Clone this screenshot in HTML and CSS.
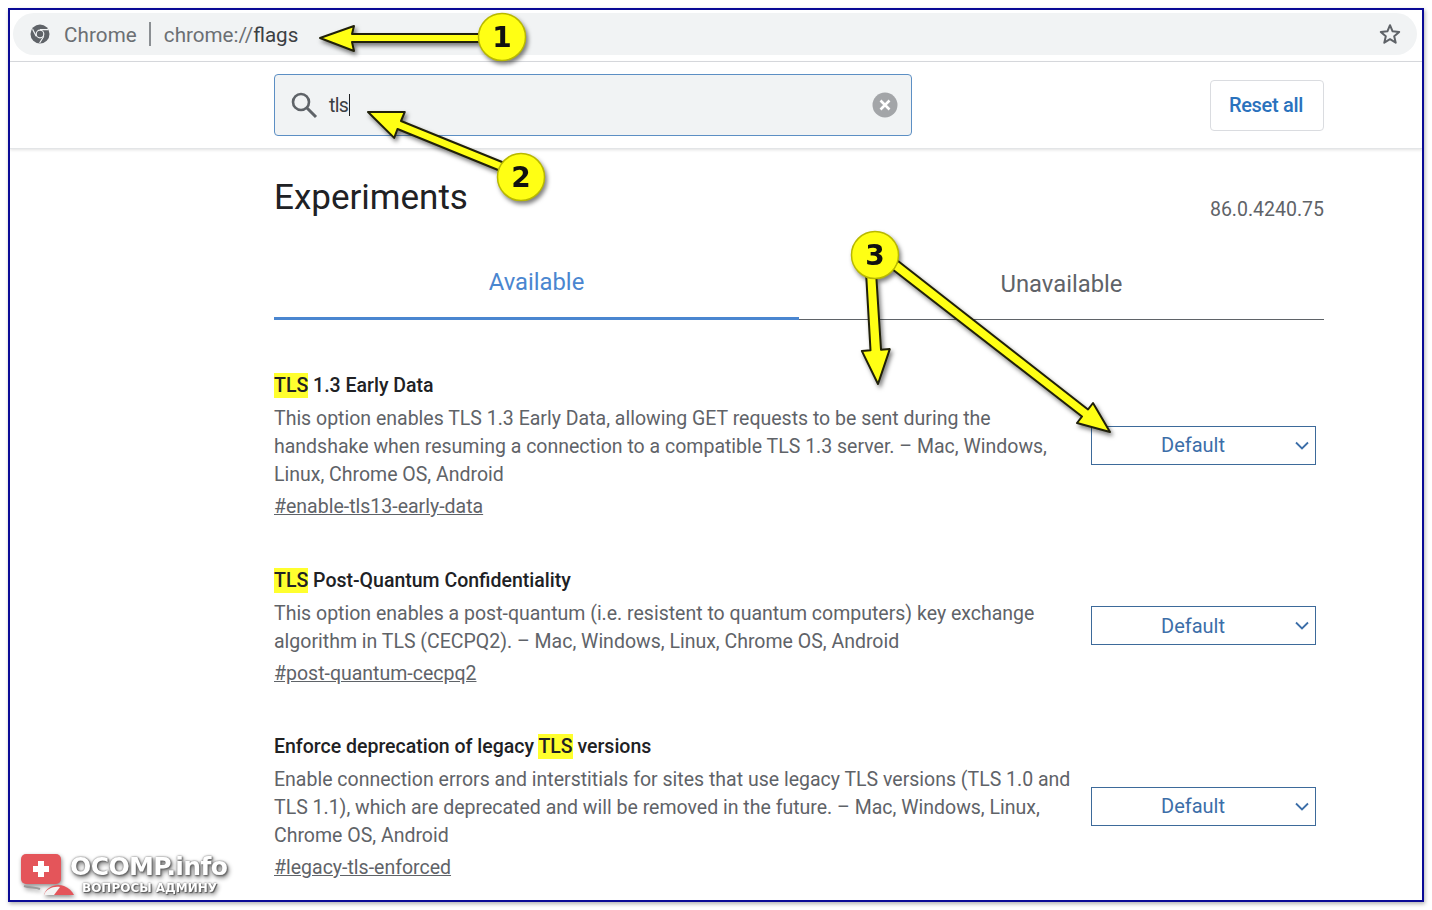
FILE: index.html
```html
<!DOCTYPE html>
<html lang="en">
<head>
<meta charset="utf-8">
<title>Experiments</title>
<link rel="stylesheet" href="styles.css">
</head>
<body>
<div class="frame">
  <div class="omnibox-row">
    <div class="omnibox">
      <svg class="chrome-icon" viewBox="0 0 20 20"><circle cx="10" cy="10" r="9.5" fill="#5f6368"/><circle cx="10" cy="10" r="4.4" fill="#f1f3f4"/><circle cx="10" cy="10" r="3.2" fill="#5f6368"/><path d="M10 5.6h8.4M6.2 12.2 2.6 5.2M13.8 12.2 9.6 19" stroke="#f1f3f4" stroke-width="1.2" fill="none"/></svg>
      <span class="origin">Chrome</span>
      <span class="divider"></span>
      <span class="url">chrome://<b class="url-strong">flags</b></span>
      <svg class="star" viewBox="0 0 24 24"><path d="M12 3.2l2.6 6.1 6.6.6-5 4.3 1.5 6.5L12 17.2l-5.7 3.5 1.5-6.5-5-4.3 6.6-.6z" fill="none" stroke="#5f6368" stroke-width="2" stroke-linejoin="round"/></svg>
    </div>
  </div>
  <header class="search-header">
    <div class="search-box">
      <svg class="search-icon" viewBox="0 0 28 28"><circle cx="11" cy="11" r="8" fill="none" stroke="#5f6368" stroke-width="2.6"/><path d="M17 17l9 9" stroke="#5f6368" stroke-width="3"/></svg>
      <span class="search-text">tls</span><span class="caret"></span>
      <svg class="clear-icon" viewBox="0 0 26 26"><circle cx="13" cy="13" r="12.5" fill="#a3a5a8"/><path d="M8.5 8.5l9 9M17.5 8.5l-9 9" stroke="#fff" stroke-width="2.6"/></svg>
    </div>
    <button class="reset">Reset all</button>
  </header>
  <main class="page">
    <div class="title-row">
      <h1 class="title">Experiments</h1>
      <span class="version">86.0.4240.75</span>
    </div>
    <div class="tabs">
      <div class="tab tab-active">Available</div>
      <div class="tab tab-idle">Unavailable</div>
    </div>
    <section class="flag">
      <div class="flag-body">
        <div class="flag-name"><mark class="hit">TLS</mark> 1.3 Early Data</div>
        <p class="flag-desc">This option enables TLS 1.3 Early Data, allowing GET requests to be sent during the<br>handshake when resuming a connection to a compatible TLS 1.3 server. – Mac, Windows,<br>Linux, Chrome OS, Android</p>
        <a class="flag-link">#enable-tls13-early-data</a>
      </div>
      <div class="select"><span class="select-text">Default</span><svg class="chev" viewBox="0 0 14 9"><path d="M1 1.5l6 6 6-6" fill="none" stroke="#3c6ea8" stroke-width="1.8"/></svg></div>
    </section>
    <section class="flag">
      <div class="flag-body">
        <div class="flag-name"><mark class="hit">TLS</mark> Post-Quantum Confidentiality</div>
        <p class="flag-desc">This option enables a post-quantum (i.e. resistent to quantum computers) key exchange<br>algorithm in TLS (CECPQ2). – Mac, Windows, Linux, Chrome OS, Android</p>
        <a class="flag-link">#post-quantum-cecpq2</a>
      </div>
      <div class="select"><span class="select-text">Default</span><svg class="chev" viewBox="0 0 14 9"><path d="M1 1.5l6 6 6-6" fill="none" stroke="#3c6ea8" stroke-width="1.8"/></svg></div>
    </section>
    <section class="flag">
      <div class="flag-body">
        <div class="flag-name">Enforce deprecation of legacy <mark class="hit">TLS</mark> versions</div>
        <p class="flag-desc">Enable connection errors and interstitials for sites that use legacy TLS versions (TLS 1.0 and<br>TLS 1.1), which are deprecated and will be removed in the future. – Mac, Windows, Linux,<br>Chrome OS, Android</p>
        <a class="flag-link">#legacy-tls-enforced</a>
      </div>
      <div class="select"><span class="select-text">Default</span><svg class="chev" viewBox="0 0 14 9"><path d="M1 1.5l6 6 6-6" fill="none" stroke="#3c6ea8" stroke-width="1.8"/></svg></div>
    </section>
  </main>
  <div class="logo">
    <svg class="logo-mark" viewBox="0 0 66 44"><rect x="1" y="1" width="40" height="30" rx="5" fill="#e4555a"/><path d="M18 8h6v5h5v6h-5v5h-6v-5h-5v-6h5z" fill="#fff"/><path d="M4 33c6 2 12 1 16 3" fill="none" stroke="#9a9a9a" stroke-width="2"/><path d="M24 42c2-8 12-12 20-9 5 2 8 5 10 9z" fill="#e4555a"/><path d="M24 42c2-6 9-9 16-8l-6 8z" fill="#f4f4f4"/></svg>
    <div class="logo-name">OCOMP.info</div>
    <div class="logo-sub">ВОПРОСЫ АДМИНУ</div>
  </div>
</div>
<svg class="notes" viewBox="0 0 1432 910" width="1432" height="910">
  <g class="callout">
    <polygon class="arrow" points="320,38 354,26 352,34 482,34 482,42 352,42 354,51"/>
    <circle class="dot" cx="502" cy="37" r="23.5"/>
    <text class="num" x="502" y="47">1</text>
  </g>
  <g class="callout">
    <polygon class="arrow" points="368,112 404.8,111.9 401,121 507,164 503,172 397.5,129 394.2,137.9"/>
    <circle class="dot" cx="521" cy="177" r="23.5"/>
    <text class="num" x="521" y="187">2</text>
  </g>
  <g class="callout">
    <polygon class="arrow" points="878,384 889.8,349.1 881,349.7 876,272 866,272 870.5,350.3 861.8,350.9"/>
    <polygon class="arrow" points="1110,432 1093,403 1088,409.5 898,261 892,269 1082,416.5 1077,423"/>
    <circle class="dot" cx="875" cy="255" r="23.5"/>
    <text class="num" x="875" y="265">3</text>
  </g>
</svg>
</body>
</html>
```
FILE: styles.css
```css
* { box-sizing: border-box; }
html, body { margin: 0; height: 100%; overflow: hidden; background: #fff; }
body { padding: 8px; font-family: Roboto, "Liberation Sans", sans-serif; color: #202124; }

.frame {
  position: relative;
  width: 1416px;
  height: 894px;
  border: 2px solid #0a0a96;
  background: #fff;
  overflow: hidden;
  box-shadow: 1px 2px 4px rgba(0,0,0,.3);
}

.omnibox-row { height: 52px; padding: 3px 5px 0 3px; border-bottom: 1px solid #dadce0; }
.omnibox {
  height: 42px;
  border-radius: 21px;
  background: #f1f3f4;
  display: flex;
  align-items: center;
  padding: 0 15px 0 17px;
  font-size: 20.6px;
  color: #6b6f73;
}
.chrome-icon { width: 20px; height: 20px; flex: none; margin-right: 14px; }
.origin { letter-spacing: .1px; padding-top: 2px; }
.divider { width: 2px; height: 24px; background: #8b8f93; margin: 0 13px 0 12px; }
.url { padding-top: 2px; }
.url-strong { font-weight: 400; color: #3c4043; }
.star { width: 24px; height: 24px; margin-left: auto; }

.search-header {
  height: 87px;
  padding: 12px 98px 0 264px;
  display: flex;
  align-items: flex-start;
  border-bottom: 1px solid #e3e5e7;
  box-shadow: 0 1px 3px rgba(0,0,0,.12);
}
.search-box {
  width: 638px;
  height: 62px;
  border: 1px solid #5c8fc4;
  border-radius: 4px;
  background: #f1f3f4;
  display: flex;
  align-items: center;
  padding: 0 13px 0 15px;
  font-size: 19.5px;
  color: #3c4043;
}
.search-icon { width: 28px; height: 28px; margin-right: 11px; flex: none; }
.search-text { letter-spacing: -.7px; }
.caret { width: 1px; height: 22px; background: #202124; margin-left: 1px; }
.clear-icon { width: 26px; height: 26px; margin-left: auto; }
.reset {
  margin: 6px 0 0 auto;
  width: 114px;
  height: 51px;
  border: 1px solid #dadce0;
  border-radius: 4px;
  background: #fff;
  font: 500 20px Roboto, sans-serif;
  letter-spacing: -.3px;
  color: #2a72bd;
  padding: 0 2px 2px 0;
}

.page { width: 1050px; margin-left: 264px; }
.title-row { display: flex; justify-content: space-between; align-items: flex-end; height: 81px; }
.title { margin: 0; font-size: 35px; font-weight: 400; line-height: 40px; margin-bottom: 12px; color: #202124; }
.version { font-size: 19.5px; line-height: 24px; color: #5f6368; margin-bottom: 8px; }
.tabs { display: flex; height: 92px; border-bottom: 1px solid #5f6368; margin-top: -2px; }
.tab { flex: 1; text-align: center; font-size: 23.8px; line-height: 28px; }
.tab-active { padding-top: 40px; color: #4a86d0; border-bottom: 3px solid #4a86d0; height: 92px; }
.tab-idle { padding-top: 42px; color: #5f6368; }

.flag { display: flex; align-items: center; justify-content: space-between; padding-right: 8px; margin-top: 45.5px; }
.tabs + .flag { margin-top: 52px; }
.flag-body { width: 810px; }
.flag-name { font-size: 19.5px; line-height: 28px; font-weight: 500; color: #202124; }
.hit { background: #ffff2e; color: inherit; padding: 1px 0; }
.flag-desc { margin: 5px 0 4px; font-size: 19.5px; line-height: 28px; color: #5f6368; white-space: nowrap; }
.flag-link { display: block; font-size: 19.5px; line-height: 28px; color: #5f6368; text-decoration: underline; }

.select {
  width: 225px;
  height: 39px;
  margin-bottom: 3px;
  border: 1px solid #3d6a9a;
  display: flex;
  align-items: center;
  padding: 0 6px 0 69px;
  font-size: 20px;
  color: #3c6ea8;
}
.select-text { flex: 1; }
.chev { width: 14px; height: 9px; }

.logo {
  position: absolute;
  left: 10px;
  top: 843px;
  width: 215px;
  height: 44px;
  filter: drop-shadow(1px 2px 2px rgba(0,0,0,.45));
}
.logo-mark { position: absolute; left: 0; top: 0; width: 66px; height: 44px; }
.logo-name { position: absolute; left: 50px; top: 0; font: 700 25px/28px "DejaVu Sans", sans-serif; color: #fff; letter-spacing: -.6px; text-shadow: 0 0 2px #777, 1px 1px 2px #555; white-space: nowrap; }
.logo-sub { position: absolute; left: 62px; top: 27px; font: 700 12px/16px "DejaVu Sans", sans-serif; color: #fff; text-shadow: 0 0 2px #666, 1px 1px 1px #555; white-space: nowrap; }

.notes { position: absolute; left: 0; top: 0; pointer-events: none; }
.callout { filter: drop-shadow(2px 3px 2px rgba(0,0,0,.5)); }
.arrow { fill: #ffff14; stroke: #20200a; stroke-width: 2; stroke-linejoin: round; }
.dot { fill: #ffff14; stroke: #b8b800; stroke-width: 1.5; }
.num { font: 700 28px "DejaVu Sans", sans-serif; fill: #111; text-anchor: middle; }
```
